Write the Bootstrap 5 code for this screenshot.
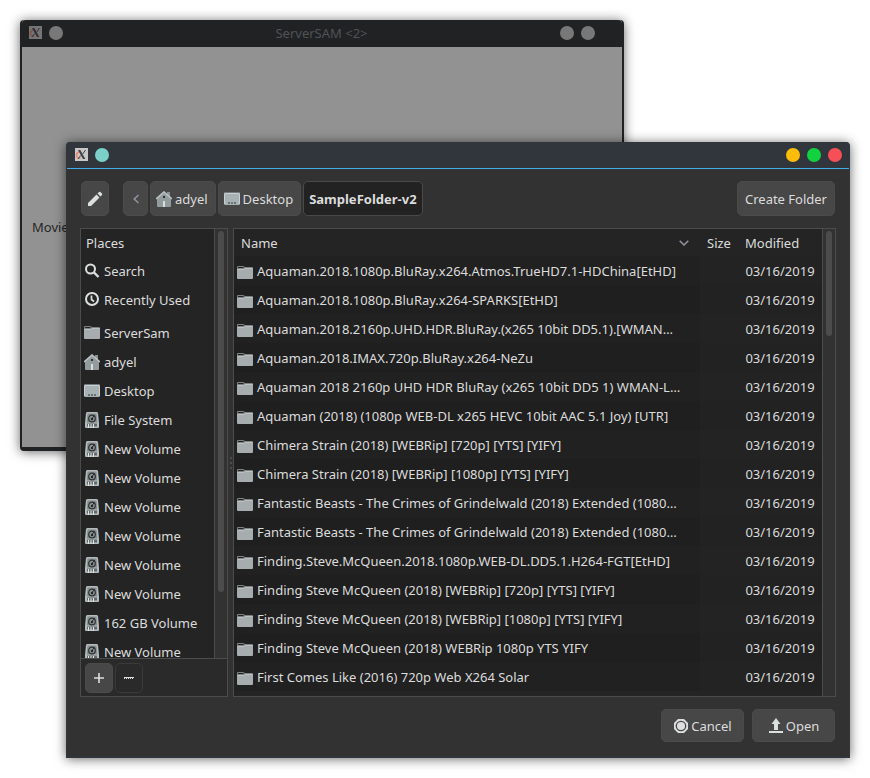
<!DOCTYPE html>
<html lang="en">
<head>
<meta charset="utf-8">
<meta name="viewport" content="width=device-width, initial-scale=1">
<title>ServerSAM - Select Folder</title>
<link href="https://cdn.jsdelivr.net/npm/bootstrap@5.3.0/dist/css/bootstrap.min.css" rel="stylesheet">
<style>
  body { font-family: "Noto Sans", sans-serif; font-size: 13px; line-height: 20px; background: #fff; color: #dcdcdc; }
  .app-window { top: 20px; left: 20px; width: 604px; height: 431px; background: #929292; border: 2px solid #202224; border-top: 0; border-bottom-width: 4px; border-radius: 4px; box-shadow: 0 1px 12px rgba(0,0,0,.6); }
  .app-title { height: 27px; background: #202224; color: #4f5356; border-radius: 4px 4px 0 0; padding: 0 27px 2px 7px; }
  .app-name { padding-left: 20px; }
  .app-label { color: #262626; padding: 170px 0 0 10px; }
  .title-set { gap: 7px; }
  .dot { width: 14px; height: 14px; border-radius: 50%; background: #787878; border: 0; padding: 0; }
  .dot-teal { background: #7bd0c9; } .dot-yellow { background: #fdbc09; } .dot-green { background: #12d240; } .dot-red { background: #f74f57; }
  .dialog { margin: 142px 20px 20px 66px; background: #323232; border: 1px solid #30363b; border-top: 0; border-bottom-width: 2px; border-radius: 4px 4px 0 0; box-shadow: 0 1px 12px rgba(0,0,0,.6); }
  .dialog-title { height: 27px; background: #30363b; border-bottom: 1px solid #3daee9; border-radius: 4px 4px 0 0; padding: 0 7px 1px 8px; }
  .dialog-body { padding: 12px 13px 14px 13px; }
  .tool { --bs-btn-color: #dcdcdc; --bs-btn-bg: #474747; --bs-btn-border-color: #4b4b4b; --bs-btn-hover-color: #fff; --bs-btn-hover-bg: #525252; --bs-btn-hover-border-color: #565656; --bs-btn-font-size: 13px; --bs-btn-line-height: 20px; --bs-btn-border-radius: 5px; --bs-btn-padding-y: 0; --bs-btn-padding-x: 7px; display: flex; align-items: center; justify-content: center; gap: 2px; height: 35px; white-space: nowrap; }
  .tool-dark { --bs-btn-padding-x: 5px; --bs-btn-bg: #222; --bs-btn-border-color: #4a4a4a; --bs-btn-font-weight: 700; }
  .tool-edit { --bs-btn-padding-x: 5px; width: 28px; margin: 0 14px 0 1px; }
  .tool-crumb { padding-left: 5px; gap: 3px; }
  .tool-back { width: 25px; }
  .tool-new { margin-right: 1px; }
  .path-bar { gap: 2px; }
  .tool-mini { width: 28px; height: 30px; }
  .tool-off { --bs-btn-bg: #2a2a2a; --bs-btn-border-color: #3a3a3a; }
  .tool-act { width: 83px; height: 33px; }
  .panes { margin-top: 12px; }
  .pane { border: 1px solid #4c4c4c; background: #242424; }
  .side { width: 148px; }
  .side-list { flex: 1 1 0px; min-height: 0; }
  .side-head { height: 27px; padding: 4px 5px; }
  .place { display: flex; align-items: center; gap: 4px; height: 29px; padding-left: 3px; color: #dcdcdc; text-decoration: none; }
  .place-gap { margin-top: 4px; }
  .side-foot { border-top: 1px solid #4c4c4c; background: #2a2a2a; padding: 4px 4px 3px; gap: 2px; }
  .track { width: 13px; border-left: 1px solid #4c4c4c; background: #323232; padding: 2px 3px; }
  .thumb { width: 6px; height: 105px; border-radius: 3px; background: #4c4c4c; }
  .thumb-side { height: 85%; }
  .grip { width: 5px; gap: 3px; }
  .grip i { width: 2px; height: 2px; background: #4c4c4c; }
  .files { table-layout: fixed; color: #dcdcdc; margin-bottom: 5px; }
  .files th { height: 27px; font-weight: 400; padding: 1px 7px 0; }
  .files td { height: 29px; background: #212121; padding: 0 3px; white-space: nowrap; }
  .files td + td { background: #232323; text-align: center; padding: 0; }
  .files tr:nth-child(even) td { background: #1f1f1f; }
  .files tr:nth-child(even) td + td { background: #222; }
  .files td svg { margin: 0 4px 0 0; vertical-align: -3px; }
  .col-size { width: 38px; } .col-date { width: 84px; }
  .foot { margin-top: 12px; gap: 8px; padding-right: 1px; }
  svg { flex: none; }
</style>
</head>
<body>
<svg class="d-none" aria-hidden="true">
  <symbol id="xlogo" viewBox="0 0 13 13"><rect width="13" height="13" fill="#c9c7c5"/><path d="M5 3.500Q.8 5 1.700 8.200 2.500 10.800 5.500 10" fill="none" stroke="#e4896c" stroke-width="1.600"/><path d="M3 2h2.300l5 9H8z" fill="#3c4148"/><path d="M10.500 2 7.600 6.200M5.700 7.500 3 11" stroke="#3c4148"/></symbol>
  <symbol id="folder" viewBox="0 0 16 13"><path d="M0 1Q0 0 1 0h5l2 1h7q1 0 1 1v2H0z" fill="#7e8283"/><path d="M1 1h5l1 1H1z" fill="#222"/><path d="M0 3h7l1-1h8v10q0 1-1 1H1q-1 0-1-1z" fill="#a7adaf"/><path d="M.5 3.500H7l1-1h7.500" fill="none" stroke="#bcc2c3"/></symbol>
  <symbol id="home" viewBox="0 0 16 16"><path d="M11 1h3v6h-3z" fill="#8c9294"/><path d="M1 7 8 1l7 6v8q0 1-1 1H2q-1 0-1-1z" fill="#949b9d"/><path d="M0 8 8 1l8 7" fill="none" stroke="#bcc3c4" stroke-width="1.600"/><path d="M7 10h2v6H7z" fill="#d8dddd"/><path d="M7 5h2v2H7z" fill="#303435"/></symbol>
  <symbol id="desk" viewBox="0 0 16 13"><rect width="16" height="13" rx="1.500" fill="#a7b0b2"/><path d="M1 .5h14" stroke="#737a7c"/><path d="M1 1.500h14M.5 2v10M15.500 2v10" stroke="#cad0d1"/><path d="M4 11h2m1 0h2m1 0h2" stroke="#2c3031" stroke-width="1.200"/></symbol>
  <symbol id="disk" viewBox="0 0 14 16"><path d="M2 0h10l1 1 1 10v4q0 1-1 1H1q-1 0-1-1v-4L1 1z" fill="#b4bbbc"/><path d="M2.500 1.500h9l.7 9H1.800z" fill="#858c8e"/><circle cx="7" cy="6.500" r="3.300" fill="#8d9496" stroke="#2d3132" stroke-width="1.200"/><circle cx="7" cy="7" r="1.200" fill="#222"/><path d="M7 6.500 9.500 3.500" stroke="#222"/><path d="M2 11.500h10v3H2z" fill="#62696b"/><path d="M3.500 12v4m2.500-4v4m2.500-4v4" stroke="#e2e6e6"/></symbol>
</svg>

<main class="position-relative overflow-hidden">
  <section class="app-window position-absolute">
    <header class="app-title title-set d-flex align-items-center">
      <svg width="13" height="13" opacity=".5"><use href="#xlogo"/></svg>
      <button class="dot" aria-label="Menu"></button>
      <span class="app-name flex-grow-1 text-center">ServerSAM &lt;2&gt;</span>
      <button class="dot" aria-label="Minimize"></button><button class="dot" aria-label="Close"></button>
    </header>
    <div class="app-label">Movie Folder</div>
  </section>

  <section class="dialog position-relative">
    <header class="dialog-title title-set d-flex align-items-center">
      <svg width="13" height="13"><use href="#xlogo"/></svg>
      <button class="dot dot-teal me-auto" aria-label="Menu"></button>
      <button class="dot dot-yellow" aria-label="Minimize"></button><button class="dot dot-green" aria-label="Maximize"></button><button class="dot dot-red" aria-label="Close"></button>
    </header>
    <div class="dialog-body">
      <div class="d-flex">
        <button class="btn tool tool-edit" aria-label="Type a file name"><svg width="16" height="16" viewBox="0 0 16 16" fill="#dcdfdf"><path d="M1 12 9.500 3.500l3 3L4 15H1zM10.500 2.500 12 1q.7-.5 1.400 0L15 2.600q.5.700 0 1.400l-1.500 1.500z"/></svg></button>
        <nav class="path-bar d-flex me-auto" aria-label="Path">
          <button class="btn tool tool-back" aria-label="Back"><svg width="6" height="10" viewBox="0 0 6 10" fill="none" stroke="#9295a0" stroke-width="1.500"><path d="M5.500 1 1.200 5l4.300 4"/></svg></button>
          <button class="btn tool tool-crumb"><svg width="16" height="16"><use href="#home"/></svg>adyel</button>
          <button class="btn tool tool-crumb"><svg width="16" height="13"><use href="#desk"/></svg>Desktop</button>
          <button class="btn tool tool-dark">SampleFolder-v2</button>
        </nav>
        <button class="btn tool tool-new">Create Folder</button>
      </div>

      <div class="panes d-flex">
        <aside class="pane side d-flex flex-column flex-shrink-0">
          <div class="side-list d-flex overflow-hidden">
            <nav class="flex-grow-1" aria-label="Places">
              <div class="side-head">Places</div>
              <a class="place" href="#"><svg width="16" height="16" viewBox="0 0 16 16" fill="none" stroke="#dcdfdf"><circle cx="6.500" cy="6" r="4.500" stroke-width="2"/><path d="m9.500 9 5 5" stroke-width="2.400"/></svg>Search</a>
              <a class="place" href="#"><svg width="16" height="16" viewBox="0 0 16 16" fill="none" stroke="#dcdfdf" stroke-width="2"><circle cx="8" cy="7" r="6"/><path d="M7.500 3.500V7.500l2.500 2" stroke-width="1.700"/></svg>Recently Used</a>
              <a class="place place-gap" href="#"><svg width="16" height="13"><use href="#folder"/></svg>ServerSam</a>
              <a class="place" href="#"><svg width="16" height="16"><use href="#home"/></svg>adyel</a>
              <a class="place" href="#"><svg width="16" height="13"><use href="#desk"/></svg>Desktop</a>
              <a class="place" href="#"><svg width="16" height="16"><use href="#disk"/></svg>File System</a>
              <a class="place" href="#"><svg width="16" height="16"><use href="#disk"/></svg>New Volume</a>
              <a class="place" href="#"><svg width="16" height="16"><use href="#disk"/></svg>New Volume</a>
              <a class="place" href="#"><svg width="16" height="16"><use href="#disk"/></svg>New Volume</a>
              <a class="place" href="#"><svg width="16" height="16"><use href="#disk"/></svg>New Volume</a>
              <a class="place" href="#"><svg width="16" height="16"><use href="#disk"/></svg>New Volume</a>
              <a class="place" href="#"><svg width="16" height="16"><use href="#disk"/></svg>New Volume</a>
              <a class="place" href="#"><svg width="16" height="16"><use href="#disk"/></svg>162 GB Volume</a>
              <a class="place" href="#"><svg width="16" height="16"><use href="#disk"/></svg>New Volume</a>
            </nav>
            <div class="track"><div class="thumb thumb-side"></div></div>
          </div>
          <div class="side-foot d-flex">
            <button class="btn tool tool-mini" aria-label="Add bookmark"><svg width="10" height="10" viewBox="0 0 10 10" stroke="#dcdfdf" stroke-width="1.600"><path d="M5 0v10M0 5h10"/></svg></button>
            <button class="btn tool tool-mini tool-off" aria-label="Remove bookmark"><svg width="10" height="4" viewBox="0 0 10 4" stroke="#dcdfdf" fill="none"><path d="M0 1.500h10"/><path d="M0 2.500h10" stroke-dasharray="1 1"/></svg></button>
          </div>
        </aside>
        <div class="grip d-flex flex-column justify-content-center align-items-center flex-shrink-0"><i></i><i></i><i></i></div>
        <section class="pane d-flex flex-grow-1 overflow-hidden">
          <div class="flex-grow-1 overflow-hidden">
            <table class="files w-100">
              <colgroup><col><col class="col-size"><col class="col-date"></colgroup>
              <thead><tr><th><div class="d-flex align-items-center justify-content-between">Name<svg class="me-1" width="10" height="6" viewBox="0 0 10 6" fill="none" stroke="#9295a0" stroke-width="1.500"><path d="m.7.7 4.300 4.300L9.300.7"/></svg></div></th><th>Size</th><th>Modified</th></tr></thead>
              <tbody>
                <tr><td><svg width="16" height="13"><use href="#folder"/></svg>Aquaman.2018.1080p.BluRay.x264.Atmos.TrueHD7.1-HDChina[EtHD]</td><td></td><td>03/16/2019</td></tr>
                <tr><td><svg width="16" height="13"><use href="#folder"/></svg>Aquaman.2018.1080p.BluRay.x264-SPARKS[EtHD]</td><td></td><td>03/16/2019</td></tr>
                <tr><td><svg width="16" height="13"><use href="#folder"/></svg>Aquaman.2018.2160p.UHD.HDR.BluRay.(x265 10bit DD5.1).[WMAN…</td><td></td><td>03/16/2019</td></tr>
                <tr><td><svg width="16" height="13"><use href="#folder"/></svg>Aquaman.2018.IMAX.720p.BluRay.x264-NeZu</td><td></td><td>03/16/2019</td></tr>
                <tr><td><svg width="16" height="13"><use href="#folder"/></svg>Aquaman 2018 2160p UHD HDR BluRay (x265 10bit DD5 1) WMAN-L…</td><td></td><td>03/16/2019</td></tr>
                <tr><td><svg width="16" height="13"><use href="#folder"/></svg>Aquaman (2018) (1080p WEB-DL x265 HEVC 10bit AAC 5.1 Joy) [UTR]</td><td></td><td>03/16/2019</td></tr>
                <tr><td><svg width="16" height="13"><use href="#folder"/></svg>Chimera Strain (2018) [WEBRip] [720p] [YTS] [YIFY]</td><td></td><td>03/16/2019</td></tr>
                <tr><td><svg width="16" height="13"><use href="#folder"/></svg>Chimera Strain (2018) [WEBRip] [1080p] [YTS] [YIFY]</td><td></td><td>03/16/2019</td></tr>
                <tr><td><svg width="16" height="13"><use href="#folder"/></svg>Fantastic Beasts - The Crimes of Grindelwald (2018) Extended (1080…</td><td></td><td>03/16/2019</td></tr>
                <tr><td><svg width="16" height="13"><use href="#folder"/></svg>Fantastic Beasts - The Crimes of Grindelwald (2018) Extended (1080…</td><td></td><td>03/16/2019</td></tr>
                <tr><td><svg width="16" height="13"><use href="#folder"/></svg>Finding.Steve.McQueen.2018.1080p.WEB-DL.DD5.1.H264-FGT[EtHD]</td><td></td><td>03/16/2019</td></tr>
                <tr><td><svg width="16" height="13"><use href="#folder"/></svg>Finding Steve McQueen (2018) [WEBRip] [720p] [YTS] [YIFY]</td><td></td><td>03/16/2019</td></tr>
                <tr><td><svg width="16" height="13"><use href="#folder"/></svg>Finding Steve McQueen (2018) [WEBRip] [1080p] [YTS] [YIFY]</td><td></td><td>03/16/2019</td></tr>
                <tr><td><svg width="16" height="13"><use href="#folder"/></svg>Finding Steve McQueen (2018) WEBRip 1080p YTS YIFY</td><td></td><td>03/16/2019</td></tr>
                <tr><td><svg width="16" height="13"><use href="#folder"/></svg>First Comes Like (2016) 720p Web X264 Solar</td><td></td><td>03/16/2019</td></tr>
              </tbody>
            </table>
          </div>
          <div class="track flex-shrink-0"><div class="thumb"></div></div>
        </section>
      </div>

      <div class="foot d-flex justify-content-end">
        <button class="btn tool tool-act"><svg width="16" height="16" viewBox="0 0 16 16"><path d="M5 1h6l4 4v6l-4 4H5l-4-4V5z" fill="#dcdfdf"/><circle cx="8" cy="8" r="4.700" fill="none" stroke="#474747" stroke-width="1.300"/></svg>Cancel</button>
        <button class="btn tool tool-act"><svg width="16" height="16" viewBox="0 0 16 16" fill="#dcdfdf"><path d="M8 0l4.500 6H10v6H6V6H3.500zM1 13h14v2H1z"/></svg>Open</button>
      </div>
    </div>
  </section>
</main>
<script src="https://cdn.jsdelivr.net/npm/bootstrap@5.3.0/dist/js/bootstrap.bundle.min.js"></script>
</body>
</html>
